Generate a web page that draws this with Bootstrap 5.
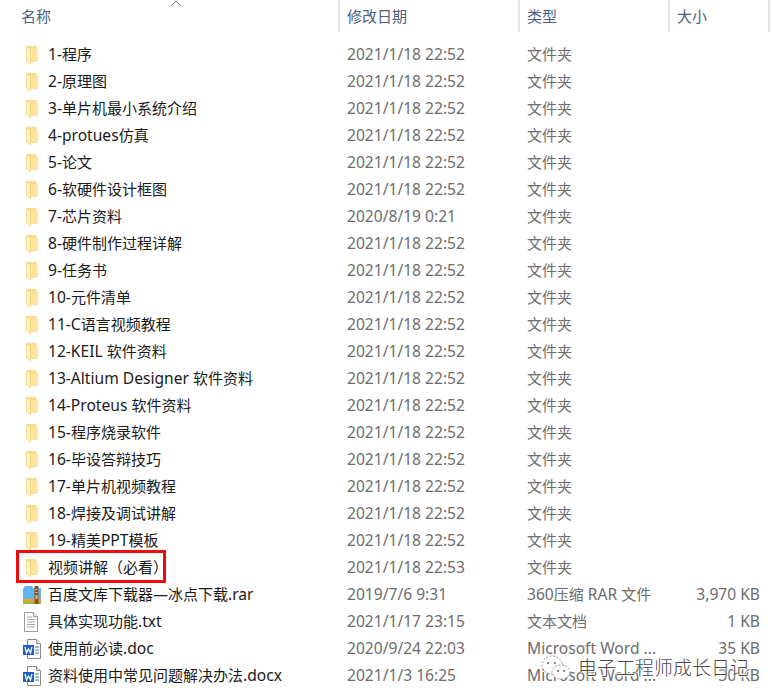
<!DOCTYPE html>
<html lang="zh">
<head>
  <meta charset="UTF-8" />
  <title>文件列表</title>
  <link href="https://cdn.jsdelivr.net/npm/bootstrap@5.3.3/dist/css/bootstrap.min.css" rel="stylesheet" />
  <style>
    body {
      background: #fff;
      font-family: "Noto Sans", "Noto Sans CJK SC", sans-serif;
      font-size: 15px;
      overflow: hidden;
    }
    .lat { font-size: 15.6px; }
    .explorer { position: relative; width: 772px; height: 700px; overflow: hidden; }
    .head-row { height: 32px; color: #4c607a; position: relative; }
    .head-cell { border-right: 2px solid #e5e5e5; padding-top: 2px; line-height: 28px; }
    .col-name { width: 340px; padding-left: 21px; }
    .col-date { width: 180px; padding-left: 7px; }
    .col-kind { width: 150px; padding-left: 7px; }
    .col-size { width: 100px; padding-left: 7px; }
    .sort-arrow { position: absolute; left: 171px; top: 0; }
    .file-list { padding-top: 9px; }
    .file-row { height: 27px; line-height: 27px; white-space: nowrap; color: #6d6d6d; }
    .row-name { width: 340px; padding-left: 22px; color: #1a1a1a; gap: 8px; overflow: hidden; }
    .row-icon { width: 18px; height: 20px; flex: none; }
    .icon-wide { width: 20px; margin-right: -2px; }
    .row-date { width: 180px; padding-left: 7px; }
    .row-kind { width: 170px; padding-left: 7px; }
    .row-size { width: 70px; text-align: right; }
    .red-box { position: absolute; left: 16px; top: 550px; width: 150px; height: 33px; border: 3px solid #f00a0a; }
    .water-mark { position: absolute; left: 540px; top: 655px; color: #4a4a4a; font-size: 19px; font-weight: 300; gap: 7px; line-height: 26px; text-shadow: 0 0 2px #fff, 0 0 3px #fff, 1px 1px 1px #fff, -1px -1px 1px #fff; }
  </style>
</head>
<body>
  <svg width="0" height="0" class="position-absolute">
    <defs>
      <symbol id="ic-folder" viewBox="0 0 18 20">
        <path d="M5 1h9l1 2v14H8z" fill="#fcdc8a"/>
        <path d="M8 4h8v12.500H8z" fill="#fee49c"/>
        <path d="M4.500 1.500l4 2.500v14.500l-4-2.500z" fill="#fff3c2" stroke="#f2cf7c" stroke-width=".8"/>
      </symbol>
      <symbol id="ic-rar" viewBox="0 0 20 20">
        <path d="M1 4l2-3h7l1 2h8v12H1z" fill="#62b4ee"/>
        <path d="M1 14h18v3H1z" fill="#f0a030"/>
        <path d="M1 17h18v2H1z" fill="#86bd3c"/>
        <path d="M12.500 1h4v18h-4z" fill="#8a4f22"/>
        <path d="M13.500 4h2v1h-2zM13.500 7h2v1h-2zM13.500 10h2v4h-2z" fill="#e6c88c"/>
      </symbol>
      <symbol id="ic-txt" viewBox="0 0 18 20">
        <path d="M2.500.5h9l4 4v15h-13z" fill="#fff" stroke="#9a9a9a"/>
        <path d="M11.500.5v4h4" fill="#eee" stroke="#9a9a9a"/>
        <path d="M5 5h5M5 7.500h8M5 10h8M5 12.500h8M5 15h8" stroke="#a8a8a8" fill="none"/>
      </symbol>
      <symbol id="ic-word" viewBox="0 0 20 20">
        <path d="M5.500.5h9l4 4v15h-13z" fill="#fff" stroke="#8a8a8a"/>
        <path d="M14.500.5v4h4" fill="#eee" stroke="#8a8a8a"/>
        <path d="M1 6h11v10H1z" fill="#1f5fbf"/>
        <path d="M3 8l1.500 6 2-4 2 4L10 8" stroke="#fff" stroke-width="1.300" fill="none"/>
        <path d="M13 8h4M13 11h4M13 14h4" stroke="#3b78c9" fill="none"/>
      </symbol>
    </defs>
  </svg>

  <div class="explorer">
    <div class="head-row d-flex">
      <div class="head-cell col-name">名称</div>
      <div class="head-cell col-date">修改日期</div>
      <div class="head-cell col-kind">类型</div>
      <div class="head-cell col-size">大小</div>
      <svg class="sort-arrow" width="10" height="6" viewBox="0 0 10 6"><path d="M.5 5.500L5 1l4.500 4.500" fill="none" stroke="#8a8a8a"/></svg>
    </div>
    <div class="file-list" id="list"></div>
    <div class="red-box"></div>
    <div class="water-mark d-flex align-items-center">
      <svg width="31" height="26" viewBox="0 0 31 26"><g fill="#fff" stroke="#999" stroke-dasharray="2 1.500"><ellipse cx="12" cy="10" rx="10" ry="9"/><ellipse cx="21" cy="17" rx="9" ry="7"/></g><circle cx="8" cy="8" r="1" fill="#666"/><circle cx="15" cy="8" r="1" fill="#666"/><circle cx="18" cy="16" r="1" fill="#666"/><circle cx="24" cy="16" r="1" fill="#666"/></svg>
      <span>电子工程师成长日记</span>
    </div>
  </div>

  <script>
    const d = '2021/1/18 22:52';
    const files = [
      ['1-程序', d], ['2-原理图', d], ['3-单片机最小系统介绍', d], ['4-protues仿真', d], ['5-论文', d],
      ['6-软硬件设计框图', d], ['7-芯片资料', '2020/8/19 0:21'], ['8-硬件制作过程详解', d], ['9-任务书', d],
      ['10-元件清单', d], ['11-C语言视频教程', d], ['12-KEIL 软件资料', d], ['13-Altium Designer 软件资料', d],
      ['14-Proteus 软件资料', d], ['15-程序烧录软件', d], ['16-毕设答辩技巧', d], ['17-单片机视频教程', d],
      ['18-焊接及调试讲解', d], ['19-精美PPT模板', d], ['视频讲解（必看）', '2021/1/18 22:53'],
      ['百度文库下载器—冰点下载.rar', '2019/7/6 9:31', '360压缩 RAR 文件', '3,970 KB', 'rar'],
      ['具体实现功能.txt', '2021/1/17 23:15', '文本文档', '1 KB', 'txt'],
      ['使用前必读.doc', '2020/9/24 22:03', 'Microsoft Word ...', '35 KB', 'word'],
      ['资料使用中常见问题解决办法.docx', '2021/1/3 16:25', 'Microsoft Word ...', '30 KB', 'word']
    ];
    // latin runs are a bit wider in the original, so they get their own size
    const lat = s => s.replace(/[\x20-\x7e]+/g, m => `<span class="lat">${m}</span>`);
    document.getElementById('list').innerHTML = files.map(f => `
      <div class="file-row d-flex">
        <div class="row-name d-flex align-items-center">
          <svg class="row-icon ${f[4] === 'rar' || f[4] === 'word' ? 'icon-wide' : ''}"><use href="#ic-${f[4] || 'folder'}"/></svg><span>${lat(f[0])}</span>
        </div>
        <div class="row-date">${lat(f[1])}</div>
        <div class="row-kind">${lat(f[2] || '文件夹')}</div>
        <div class="row-size">${lat(f[3] || '')}</div>
      </div>`).join('');
  </script>
  <script src="https://cdn.jsdelivr.net/npm/bootstrap@5.3.3/dist/js/bootstrap.bundle.min.js"></script>
</body>
</html>
